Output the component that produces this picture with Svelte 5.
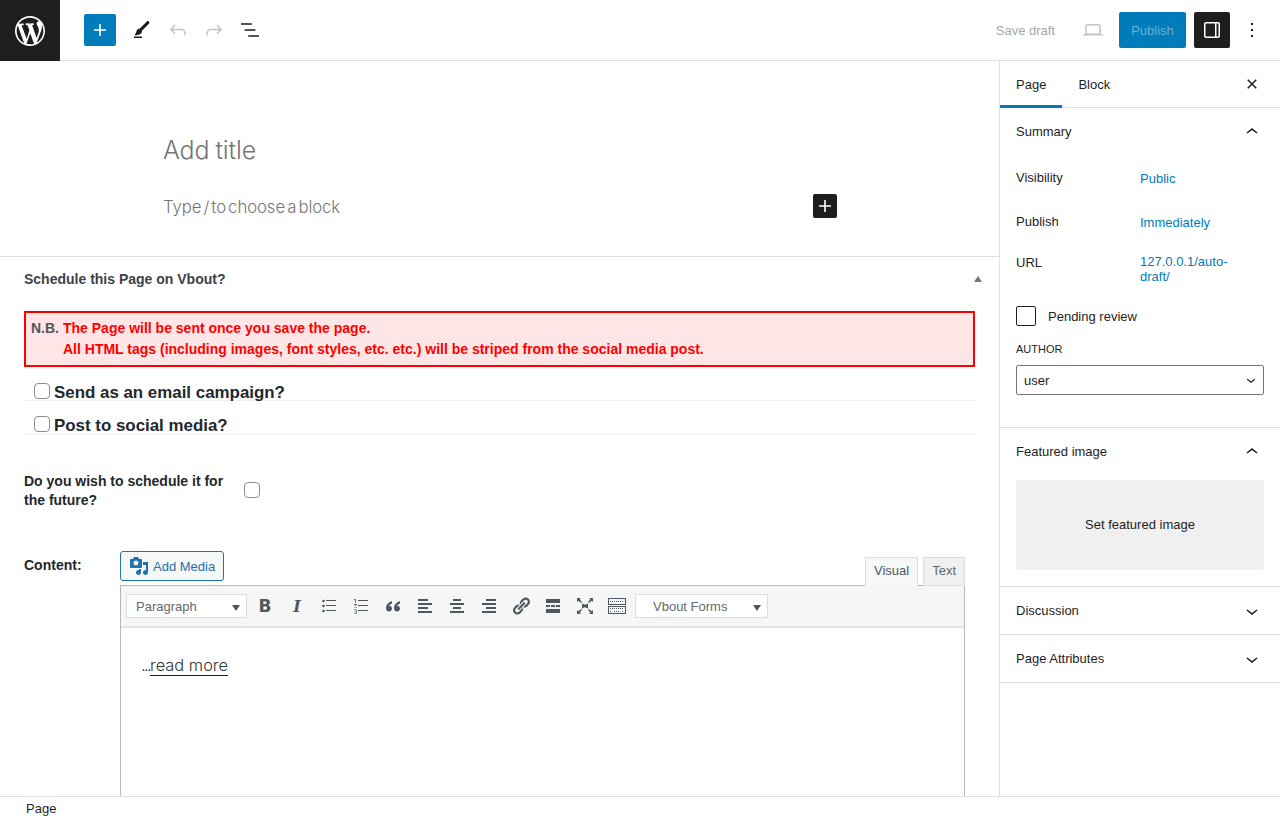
<script>
  const chevronUp = "M6.5 12.4L12 8l5.5 4.4-.9 1.2L12 10l-4.5 3.6-1-1.2z";
  const chevronDown = "M17.5 11.6L12 16l-5.5-4.4.9-1.2L12 14l4.5-3.6 1 1.2z";
</script>

<div class="page">
  <header class="topbar">
    <div class="logo">
      <svg viewBox="0 0 20 20" width="30" height="30" fill="#fff"><path d="M20 10c0-5.51-4.5-10-10-10S0 4.49 0 10c0 5.51 4.5 10 10 10s10-4.49 10-10zM7.78 15.37L4.37 6.22c.55-.02 1.17-.08 1.17-.08.5-.06.44-1.13-.06-1.11 0 0-1.45.11-2.37.11-.18 0-.37 0-.58-.01C4.12 2.69 6.87 1.11 10 1.11c2.33 0 4.45.87 6.05 2.34-.68-.11-1.65.39-1.65 1.58 0 .74.45 1.36.9 2.1.35.61.55 1.36.55 2.46 0 1.49-1.4 5-1.4 5l-3.03-8.37c.54-.02.82-.17.82-.17.5-.05.44-1.25-.06-1.22 0 0-1.44.12-2.38.12-.87 0-2.33-.12-2.33-.12-.5-.03-.56 1.2-.06 1.22l.92.08 1.26 3.41zM17.41 10c.24-.64.74-1.87.43-4.25.7 1.29 1.05 2.71 1.05 4.25 0 3.29-1.73 6.24-4.4 7.78.97-2.59 1.94-5.2 2.92-7.78zM6.1 18.09C3.12 16.65 1.11 13.53 1.11 10c0-1.3.23-2.48.72-3.59C3.25 10.3 4.67 14.2 6.1 18.09zm4.03-6.63l2.58 6.98c-.86.29-1.76.45-2.71.45-.79 0-1.57-.11-2.29-.33.81-2.38 1.62-4.74 2.42-7.1z"/></svg>
    </div>
    <div class="tools">
      <button class="add">
        <svg viewBox="0 0 24 24" width="24" height="24" fill="#fff"><path d="M18 11.2h-5.2V6h-1.6v5.2H6v1.6h5.2V18h1.6v-5.2H18z"/></svg>
      </button>
      <span class="tool"><svg viewBox="0 0 24 24" width="24" height="24" fill="#1e1e1e"><path d="M4 20h8v-1.5H4V20zM18.9 3.5c-.6-.6-1.5-.6-2.1 0l-7.2 7.2c-.4-.1-.7 0-1.1.1-.5.2-1.5.7-1.9 2.2-.4 1.7-.8 2.2-1.1 2.7-.1.1-.2.3-.3.4l-.6 1.1H6c2 0 3.4-.4 4.7-1.4.8-.6 1.2-1.4 1.3-2.3 0-.3 0-.5-.1-.7L19 5.7c.5-.6.5-1.6-.1-2.2z"/></svg></span>
      <span class="tool"><svg viewBox="0 0 24 24" width="24" height="24" fill="#c4c4c4"><path d="M18.3 11.7c-.6-.6-1.4-.9-2.3-.9H6.7l2.9-3.3-1.1-1-4.5 5L8.5 16l1-1-2.7-2.7H16c.5 0 .9.2 1.3.5 1 1 1 3.4 1 4.5v.3h1.5v-.2c0-1.5 0-4.3-1.5-5.7z"/></svg></span>
      <span class="tool"><svg viewBox="0 0 24 24" width="24" height="24" fill="#c4c4c4"><path d="M15.6 6.5l-1.1 1 2.9 3.3H8c-.9 0-1.7.3-2.3.9-1.4 1.5-1.4 4.2-1.4 5.6v.2h1.5v-.3c0-1.1 0-3.5 1-4.5.3-.3.7-.5 1.3-.5h9.2L14.5 15l1.1 1.1 4.6-4.6-4.6-5z"/></svg></span>
      <span class="tool"><svg viewBox="0 0 24 24" width="24" height="24" fill="#1e1e1e"><path d="M13.8 5.2H3v1.5h10.8V5.2zm-3.6 12v1.5H21v-1.5H10.2zm7.2-6H6.6v1.5h10.8v-1.5z"/></svg></span>
    </div>
    <div class="actions">
      <span class="save">Save draft</span>
      <svg class="laptop" viewBox="0 0 24 24" width="24" height="24" fill="#c4c4c4"><path d="M20.5 16h-.7V8c0-1.1-.9-2-2-2H6.2c-1.1 0-2 .9-2 2v8h-.7c-.8 0-1.5.7-1.5 1.5h20c0-.8-.7-1.5-1.5-1.500zM5.700 8c0-.3.2-.5.5-.5h11.600c.3 0 .5.2.5.5v7.600H5.700V8z"/></svg>
      <button class="publish">Publish</button>
      <button class="panel">
        <svg viewBox="0 0 24 24" width="24" height="24" fill="#fff"><path d="M18 4H6c-1.100 0-2 .9-2 2v12c0 1.100.9 2 2 2h12c1.100 0 2-.9 2-2V6c0-1.100-.9-2-2-2zM15 18.500H6c-.3 0-.5-.2-.5-.5V6c0-.3.2-.5.5-.5h9v13zm3.500-.5c0 .3-.2.5-.5.5h-1.500v-13H18c.3 0 .5.2.5.5v12z"/></svg>
      </button>
      <svg class="more" viewBox="0 0 24 24" width="24" height="24" fill="#1e1e1e"><path d="M13 19h-2v-2h2v2zm0-6h-2v-2h2v2zm0-6h-2V5h2v2z"/></svg>
    </div>
  </header>

  <div class="body">
    <main class="editor">
      <section class="canvas">
        <h1>Add title</h1>
        <div class="block-line">
          <p>Type / to choose a block</p>
          <button class="inline-add">
            <svg viewBox="0 0 24 24" width="24" height="24" fill="#fff"><path d="M18 11.2h-5.2V6h-1.6v5.2H6v1.6h5.2V18h1.6v-5.2H18z"/></svg>
          </button>
        </div>
      </section>

      <section class="metabox">
        <div class="meta-head">
          <h2>Schedule this Page on Vbout?</h2>
          <span class="caret"></span>
        </div>
        <div class="notice">
          <span class="nb">N.B.</span>
          <div>
            <div>The Page will be sent once you save the page.</div>
            <div>All HTML tags (including images, font styles, etc. etc.) will be striped from the social media post.</div>
          </div>
        </div>
        <div class="check-row first"><span class="check"></span><strong>Send as an email campaign?</strong></div>
        <div class="check-row second"><span class="check"></span><strong>Post to social media?</strong></div>

        <div class="future">
          <label>Do you wish to schedule it for the future?</label>
          <span class="check"></span>
        </div>

        <div class="content-row">
          <label>Content:</label>
          <div class="wp-editor">
            <div class="editor-top">
              <button class="media">
                <svg viewBox="0 0 20 20" width="20" height="20" fill="#2271b1"><path d="M13 11V4c0-.55-.45-1-1-1h-1.67L9 1H5L3.67 3H2c-.55 0-1 .45-1 1v7c0 .55.45 1 1 1h10c.55 0 1-.45 1-1zM7 4.5c1.38 0 2.5 1.12 2.5 2.5S8.38 9.5 7 9.5 4.5 8.38 4.5 7 5.62 4.5 7 4.5zM14 6h5v10.5c0 1.38-1.12 2.5-2.5 2.5S14 17.88 14 16.5s1.12-2.5 2.5-2.5c.17 0 .34.02.5.05V9h-3V6zm-4 8.05V13h2v3.5c0 1.38-1.12 2.5-2.5 2.5S7 17.88 7 16.5 8.12 14 9.5 14c.17 0 .34.02.5.05z"/></svg>
                Add Media
              </button>
              <div class="tabs">
                <span class="tab active">Visual</span>
                <span class="tab">Text</span>
              </div>
            </div>
            <div class="frame">
              <div class="mce-bar">
                <span class="mce-select para">Paragraph<i></i></span>
                <span class="mce-btn bold">B</span>
                <span class="mce-btn ital">I</span>
                <span class="mce-btn">
                  <svg viewBox="0 0 16 16" width="16" height="16" fill="#50575e"><circle cx="2.500" cy="3" r="1.300"/><circle cx="2.500" cy="8" r="1.300"/><circle cx="2.500" cy="13" r="1.300"/><path d="M5 2h10v1H5zM5 7h10v1H5zM5 12h10v1H5z"/></svg>
                </span>
                <span class="mce-btn">
                  <svg viewBox="0 0 16 16" width="16" height="16" fill="#50575e"><path d="M5 2h10v1H5zM5 7h10v1H5zM5 12h10v1H5z"/><path d="M2 1h1v3.500H2zM1 1h1v1H1zM1 6h3v1H3v1H1v1.500h3v.5H1V8h1V7H1zM1 11.500h3V15.500H1v-.7h2.300v-1H1.500v-.6h1.800v-1H1z" opacity=".85"/></svg>
                </span>
                <span class="mce-btn">
                  <svg viewBox="0 0 16 16" width="16" height="16" fill="#50575e"><path d="M7 3.200C4 4 1 6 1 10.200 1 12.200 2.200 13.500 4 13.500s3-1.300 3-2.900c0-1.700-1.200-2.800-2.800-2.800.2-1 1.200-1.800 2.800-2.400zM15 3.200c-3 .8-6 2.800-6 7 0 2 1.200 3.300 3 3.300s3-1.300 3-2.900c0-1.700-1.200-2.800-2.800-2.800.2-1 1.200-1.800 2.800-2.400z"/></svg>
                </span>
                <span class="mce-btn">
                  <svg viewBox="0 0 16 16" width="16" height="16" fill="#50575e"><path d="M1 1h10v2H1zM1 5h14v2H1zM1 9h10v2H1zM1 13h14v2H1z"/></svg>
                </span>
                <span class="mce-btn">
                  <svg viewBox="0 0 16 16" width="16" height="16" fill="#50575e"><path d="M4 1h8v2H4zM1 5h14v2H1zM4 9h8v2H4zM1 13h14v2H1z"/></svg>
                </span>
                <span class="mce-btn">
                  <svg viewBox="0 0 16 16" width="16" height="16" fill="#50575e"><path d="M5 1h10v2H5zM1 5h14v2H1zM5 9h10v2H5zM1 13h14v2H1z"/></svg>
                </span>
                <span class="mce-btn">
                  <svg viewBox="0 0 20 20" width="20" height="20" fill="#50575e"><path d="M17.74 2.76c1.68 1.69 1.68 4.41 0 6.1l-1.53 1.52c-1.12 1.12-2.7 1.47-4.14 1.09l2.62-2.61.76-.77.76-.76c.84-.84.84-2.2 0-3.04-.84-.85-2.2-.85-3.04 0l-.77.76-3.38 3.38c-.37-1.44-.02-3.02 1.1-4.14l1.52-1.53c1.69-1.68 4.42-1.68 6.1 0zM8.59 13.43l5.34-5.34c.42-.42.42-1.1 0-1.52-.44-.43-1.13-.39-1.53 0l-5.33 5.34c-.42.42-.42 1.1 0 1.52.44.43 1.13.39 1.52 0zm-.76 2.29l4.14-4.15c.38 1.44.03 3.02-1.09 4.14l-1.52 1.53c-1.69 1.68-4.41 1.68-6.1 0-1.68-1.68-1.68-4.42 0-6.1l1.53-1.52c1.12-1.12 2.7-1.47 4.14-1.1l-4.14 4.15c-.85.84-.85 2.2 0 3.05.84.84 2.2.84 3.04 0z"/></svg>
                </span>
                <span class="mce-btn">
                  <svg viewBox="0 0 16 16" width="16" height="16" fill="#50575e"><path d="M1 1h14v4H1zM1 7h4v2H1zM6 7h4v2H6zM11 7h4v2h-4zM1 11h14v4H1z"/></svg>
                </span>
                <span class="mce-btn">
                  <svg viewBox="0 0 18 18" width="18" height="18" fill="#50575e"><path d="M1 1h4L3.700 2.300 6 5.300l-.8.8L2.300 3.700 1 5zM17 1v4l-1.300-1.300L12.800 6.100l-.8-.8 2.300-3L13 1zM1 17v-4l1.300 1.300 2.900-2.400.8.800-2.300 3L5 17zM17 17h-4l1.300-1.300-2.300-3 .8-.8 2.900 2.400L17 13zM6 6.500l3 1.300 3-1.300v5L9 10.200 6 11.500z"/></svg>
                </span>
                <span class="mce-btn">
                  <svg viewBox="0 0 18 16" width="18" height="16" fill="none" stroke="#50575e"><rect x=".5" y=".5" width="17" height="6"/><rect x=".5" y="8.500" width="17" height="7"/><path d="M2 3.500h14M2 10.500h14M2 13.500h2M6 13.500h6M14 13.500h2" stroke-dasharray="1 1"/></svg>
                </span>
                <span class="mce-select vbout">Vbout Forms<i></i></span>
              </div>
              <div class="mce-body">
                <p><span class="dots">...</span><span class="read-more">read more</span></p>
              </div>
            </div>
          </div>
        </div>
      </section>
    </main>

    <aside class="sidebar">
      <div class="side-tabs">
        <span class="side-tab active">Page</span>
        <span class="side-tab">Block</span>
        <svg class="close" viewBox="0 0 24 24" width="24" height="24" fill="#1e1e1e"><path d="M12 13.060l3.712 3.713 1.061-1.060L13.061 12l3.712-3.712-1.060-1.060L12 10.938 8.288 7.227l-1.061 1.060L10.939 12l-3.712 3.712 1.060 1.061L12 13.061z"/></svg>
      </div>

      <section class="side-panel summary">
        <div class="panel-head">
          <span>Summary</span>
          <svg viewBox="0 0 24 24" width="24" height="24" fill="#1e1e1e"><path d={chevronUp}/></svg>
        </div>
        <div class="meta-grid">
          <div class="row vis"><span>Visibility</span><a href="#public">Public</a></div>
          <div class="row pub"><span>Publish</span><a href="#publish">Immediately</a></div>
          <div class="row url"><span>URL</span><a href="#url">127.0.0.1/auto-draft/</a></div>
        </div>
        <div class="pending"><span class="big-check"></span>Pending review</div>
        <div class="author-label">AUTHOR</div>
        <div class="author-select">user
          <svg viewBox="0 0 24 24" width="18" height="18" fill="#1e1e1e"><path d={chevronDown}/></svg>
        </div>
      </section>

      <section class="side-panel featured">
        <div class="panel-head">
          <span>Featured image</span>
          <svg viewBox="0 0 24 24" width="24" height="24" fill="#1e1e1e"><path d={chevronUp}/></svg>
        </div>
        <div class="image-box">Set featured image</div>
      </section>

      <section class="side-panel">
        <div class="panel-head">
          <span>Discussion</span>
          <svg viewBox="0 0 24 24" width="24" height="24" fill="#1e1e1e"><path d={chevronDown}/></svg>
        </div>
      </section>
      <section class="side-panel">
        <div class="panel-head">
          <span>Page Attributes</span>
          <svg viewBox="0 0 24 24" width="24" height="24" fill="#1e1e1e"><path d={chevronDown}/></svg>
        </div>
      </section>
    </aside>
  </div>

  <footer class="statusbar">Page</footer>
</div>

<style>
  :global(body) {
    margin: 0;
    background: #fff;
    overflow: hidden;
  }

  .page {
    width: 1280px;
    height: 821px;
    display: flex;
    flex-direction: column;
    font-family: "Liberation Sans", Arial, sans-serif;
    font-size: 13px;
    color: #1e1e1e;
    overflow: hidden;
  }

  button {
    border: none;
    padding: 0;
    font-family: inherit;
  }

  /* top bar */
  .topbar {
    height: 60px;
    flex: none;
    display: flex;
    align-items: center;
    border-bottom: 1px solid #e0e0e0;
    box-sizing: content-box;
  }

  .logo {
    width: 60px;
    height: 61px;
    margin-bottom: -1px;
    background: #1e1e1e;
    display: flex;
    align-items: center;
    justify-content: center;
  }

  .tools {
    display: flex;
    align-items: center;
    margin-left: 24px;
    gap: 4px;
  }

  .add {
    width: 32px;
    height: 32px;
    border-radius: 2px;
    background: #007cba;
    display: flex;
    align-items: center;
    justify-content: center;
    margin-right: 6px;
  }

  .tool {
    width: 32px;
    height: 32px;
    display: flex;
    align-items: center;
    justify-content: center;
  }

  .actions {
    margin-left: auto;
    display: flex;
    align-items: center;
    padding-right: 16px;
  }

  .save {
    color: #a7a7a7;
    margin-right: 26px;
  }

  .laptop {
    margin-right: 14px;
  }

  .publish {
    width: 67px;
    height: 36px;
    border-radius: 2px;
    background: #007cba;
    color: #66b0d6;
    font-size: 13px;
    margin-right: 8px;
  }

  .panel {
    width: 36px;
    height: 36px;
    border-radius: 2px;
    background: #1e1e1e;
    display: flex;
    align-items: center;
    justify-content: center;
    margin-right: 10px;
  }

  /* main area */
  .body {
    flex: 1;
    min-height: 0;
    display: flex;
  }

  .editor {
    flex: 1;
    min-width: 0;
    overflow: hidden;
  }

  .canvas {
    height: 195px;
    padding: 71px 163px 0;
    box-sizing: border-box;
    font-family: Inter, sans-serif;
    font-weight: 300;
  }

  h1 {
    margin: 0;
    font-size: 25px;
    line-height: 36px;
    height: 36px;
    font-weight: 300;
    color: #757575;
    letter-spacing: -0.1px;
    word-spacing: -1px;
  }

  .block-line {
    margin-top: 26px;
    width: 674px;
    display: flex;
    align-items: center;
    justify-content: space-between;
  }

  .block-line p {
    margin: 2px 0 0;
    font-size: 16.8px;
    color: #757575;
    letter-spacing: -0.1px;
    word-spacing: -2.5px;
  }

  .inline-add {
    width: 24px;
    height: 24px;
    background: #1e1e1e;
    border-radius: 2px;
    display: flex;
  }

  /* schedule metabox */
  .metabox {
    border-top: 1px solid #ddd;
    padding: 0 24px;
    color: #2c3338;
  }

  .meta-head {
    display: flex;
    justify-content: space-between;
    align-items: center;
    height: 44px;
    margin-bottom: 10px;
  }

  h2 {
    margin: 0;
    font-size: 14px;
    font-weight: 700;
    color: #3c434a;
  }

  .caret {
    width: 0;
    height: 0;
    margin-right: -7px;
    border-left: 4px solid transparent;
    border-right: 4px solid transparent;
    border-bottom: 6px solid #72777c;
  }

  .notice {
    width: 951px;
    box-sizing: border-box;
    border: 2px solid #f00;
    background: #ffe6e6;
    padding: 5px;
    display: flex;
    gap: 4px;
    font-size: 14px;
    font-weight: 700;
    line-height: 21px;
    color: #f00;
  }

  .nb {
    color: #50575e;
  }

  .check-row {
    width: 951px;
    display: flex;
    align-items: center;
    gap: 4px;
    padding-left: 10px;
    box-sizing: border-box;
    border-bottom: 1px solid #f0f0f0;
    font-size: 16.9px;
    color: #23282d;
  }

  .check-row strong {
    margin-top: 4px;
  }

  .check-row.first {
    margin-top: 14px;
    height: 20px;
  }

  .check-row.second {
    margin-top: 13px;
    height: 21px;
  }

  .check {
    width: 16px;
    height: 16px;
    flex: none;
    box-sizing: border-box;
    background: #fff;
    border: 1px solid #8c8f94;
    border-radius: 4px;
  }

  .future {
    display: flex;
    align-items: center;
    margin-top: 37px;
    gap: 20px;
  }

  .future .check {
    margin-top: -2px;
  }

  .future label {
    width: 200px;
    font-size: 14px;
    font-weight: 700;
    line-height: 19px;
    color: #23282d;
  }

  .content-row {
    display: flex;
    margin-top: 41px;
  }

  .content-row label {
    width: 96px;
    padding-top: 6px;
    font-size: 14px;
    font-weight: 700;
    color: #23282d;
  }

  .wp-editor {
    width: 845px;
  }

  .editor-top {
    display: flex;
    align-items: flex-end;
    justify-content: space-between;
    height: 35px;
    position: relative;
    z-index: 1;
    margin-bottom: -1px;
  }

  .media {
    align-self: flex-start;
    width: 104px;
    height: 30px;
    box-sizing: border-box;
    display: flex;
    align-items: center;
    gap: 4px;
    padding-left: 8px;
    background: #f6f7f7;
    border: 1px solid #2271b1;
    border-radius: 3px;
    color: #2271b1;
    font-size: 13px;
  }

  .tabs {
    display: flex;
    gap: 5px;
  }

  .tab {
    height: 29px;
    box-sizing: border-box;
    display: flex;
    align-items: center;
    padding: 0 8px 2px;
    border: 1px solid #dcdcde;
    background: #f0f0f1;
    color: #646970;
    font-size: 13px;
  }

  .tab.active {
    background: #f6f7f7;
    border-bottom-color: #f6f7f7;
    color: #50575e;
  }

  .frame {
    border: 1px solid #b4b9be;
    border-bottom: none;
    height: 300px;
    background: #fff;
  }

  .mce-bar {
    height: 42px;
    box-sizing: border-box;
    display: flex;
    align-items: center;
    padding-left: 5px;
    background: #f5f6f6;
    border-bottom: 2px solid #e2e4e7;
  }

  .mce-select {
    height: 24px;
    box-sizing: border-box;
    background: #fff;
    border: 1px solid #dcdcde;
    color: #646970;
    display: flex;
    align-items: center;
    position: relative;
  }

  .mce-select i {
    position: absolute;
    right: 6px;
    top: 10px;
    width: 0;
    height: 0;
    border-left: 4px solid transparent;
    border-right: 4px solid transparent;
    border-top: 6px solid #50575e;
  }

  .para {
    width: 121px;
    padding-left: 9px;
    margin-right: 2px;
  }

  .vbout {
    width: 133px;
    padding-left: 17px;
    margin-left: 2px;
  }

  .mce-btn {
    width: 32px;
    height: 32px;
    display: flex;
    align-items: center;
    justify-content: center;
    color: #50575e;
  }

  .bold {
    font-family: "DejaVu Sans", sans-serif;
    font-weight: 700;
    font-size: 17px;
  }

  .ital {
    font-family: "DejaVu Serif", serif;
    font-weight: 700;
    font-style: italic;
    font-size: 16px;
  }

  .mce-body {
    padding: 0 20px;
    font-family: Inter, sans-serif;
    font-size: 16.4px;
    font-weight: 300;
    color: #333;
  }

  .mce-body p {
    margin: 25px 0 0;
    line-height: 24px;
  }

  .dots {
    letter-spacing: -1.6px;
  }

  .read-more {
    border-bottom: 1px solid #1e1e1e;
  }

  /* sidebar */
  .sidebar {
    width: 281px;
    flex: none;
    box-sizing: border-box;
    border-left: 1px solid #e0e0e0;
    overflow: hidden;
  }

  .side-tabs {
    height: 47px;
    display: flex;
    align-items: stretch;
    border-bottom: 1px solid #e0e0e0;
    box-sizing: border-box;
    position: relative;
  }

  .side-tab {
    padding: 0 16px;
    display: flex;
    align-items: center;
  }

  .side-tab.active {
    box-shadow: inset 0 -3px 0 #007cba;
    margin-bottom: -1px;
  }

  .close {
    position: absolute;
    right: 16px;
    top: 11px;
  }

  .side-panel {
    border-bottom: 1px solid #e0e0e0;
    padding: 0 16px;
  }

  .panel-head {
    height: 47px;
    display: flex;
    align-items: center;
    justify-content: space-between;
  }

  .summary {
    height: 320px;
    box-sizing: border-box;
  }

  .row {
    display: grid;
    grid-template-columns: 124px 1fr;
    align-items: start;
  }

  .row a {
    color: #007cba;
    text-decoration: none;
    line-height: 15px;
  }

  .vis { padding-top: 15px; }
  .vis a { margin-top: 1px; }
  .pub { padding-top: 28px; }
  .pub a { margin-top: 1px; }
  .url { padding-top: 25px; }
  .url a { width: 110px; margin-top: -1px; }

  .pending {
    display: flex;
    align-items: center;
    gap: 12px;
    margin-top: 22px;
  }

  .big-check {
    width: 20px;
    height: 20px;
    box-sizing: border-box;
    border: 1px solid #1e1e1e;
    border-radius: 2px;
  }

  .author-label {
    margin-top: 16px;
    font-size: 11px;
    line-height: 14px;
  }

  .author-select {
    margin-top: 9px;
    width: 248px;
    height: 30px;
    box-sizing: border-box;
    border: 1px solid #757575;
    border-radius: 2px;
    padding: 0 3px 0 7px;
    display: flex;
    align-items: center;
    justify-content: space-between;
  }

  .featured {
    height: 159px;
    box-sizing: border-box;
  }

  .image-box {
    margin-top: 5px;
    height: 90px;
    padding-bottom: 2px;
    box-sizing: border-box;
    background: #f0f0f0;
    border-radius: 2px;
    display: flex;
    align-items: center;
    justify-content: center;
  }

  .statusbar {
    height: 25px;
    flex: none;
    box-sizing: border-box;
    border-top: 1px solid #e0e0e0;
    padding-left: 26px;
    line-height: 23px;
    background: #fff;
    color: #1e1e1e;
  }
</style>
